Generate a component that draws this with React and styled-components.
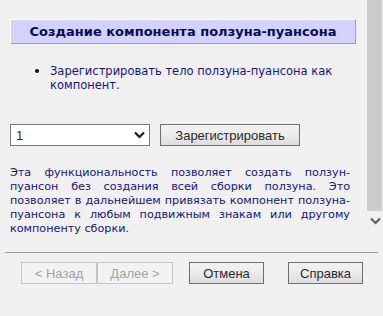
import React from "react";
import styled, { createGlobalStyle } from "styled-components";

const GlobalStyle = createGlobalStyle`
  html, body {
    margin: 0;
    padding: 0;
    background: #f0f0f0;
  }
`;

const Dialog = styled.div`
  width: 383px;
  height: 316px;
  background: #f0f0f0;
  display: flex;
  flex-direction: column;
  font-family: "DejaVu Sans", Verdana, sans-serif;
  overflow: hidden;
`;

const Pane = styled.div`
  display: flex;
  height: 240px;
`;

const Content = styled.div`
  flex: 1;
  padding: 19px 11px 0 10px;
`;

const TitleBox = styled.div`
  height: 25px;
  box-sizing: border-box;
  background: #d2d2fa;
  border-top: 1px solid #ffffff;
  border-left: 1px solid #ffffff;
  border-right: 1px solid #a0a0a0;
  border-bottom: 1px solid #a0a0a0;
  display: flex;
  align-items: center;
  justify-content: center;
  font-weight: bold;
  font-size: 13px;
  color: #0a0a5a;
`;

const Steps = styled.ul`
  margin: 19px 0 0 0;
  padding: 0 0 0 40px;
  font-size: 11.5px;
  line-height: 14px;
  color: #16167a;
  list-style: disc;

  li::marker {
    color: #0a0a40;
    font-size: 14px;
  }
`;

const Controls = styled.div`
  display: flex;
  align-items: center;
  gap: 10px;
  margin-top: 32px;
`;

const Select = styled.div`
  width: 140px;
  height: 22px;
  box-sizing: border-box;
  background: #ffffff;
  border: 1px solid #7a7a7a;
  display: flex;
  align-items: center;
  justify-content: space-between;
  padding: 0 4px 0 5px;
  font-family: "Liberation Sans", Arial, sans-serif;
  font-size: 13px;
  color: #3a2a10;
`;

const Button = styled.button`
  height: 22px;
  width: ${(p) => p.$w || 75}px;
  box-sizing: border-box;
  padding: 0;
  font-family: "Liberation Sans", Arial, sans-serif;
  font-size: 13px;
  font-weight: normal;
  color: ${(p) => (p.disabled ? "#a3a3a3" : "#2a2a2a")};
  border: 1px solid ${(p) => (p.disabled ? "#c4c4c4" : "#707070")};
  background: ${(p) =>
    p.disabled ? "#f2f2f2" : "linear-gradient(#f2f2f2, #ebebeb 50%, #dddddd)"};
  border-radius: 0;
`;

const Description = styled.div`
  margin: 20px 6px 0 0;
  font-size: 11.2px;
  line-height: 14px;
  color: #16167a;
`;

const Line = styled.span`
  display: block;
  white-space: nowrap;
  text-align: ${(p) => (p.$last ? "left" : "justify")};
  text-align-last: ${(p) => (p.$last ? "left" : "justify")};
`;

const ScrollBar = styled.div`
  width: 16px;
  display: flex;
  flex-direction: column;
  align-items: flex-start;
`;

const Thumb = styled.div`
  width: 15px;
  height: 211px;
  background: #cdcdcd;
`;

const Arrow = styled.div`
  width: 16px;
  height: 20px;
  display: flex;
  align-items: center;
  justify-content: center;
`;

const Footer = styled.div`
  flex: 1;
  padding: 0 5px;
`;

const Separator = styled.div`
  height: 1px;
  background: #a0a0a0;
  margin-top: 12px;
`;

const ButtonRow = styled.div`
  display: flex;
  margin: 9px 0 0 16px;
`;

const Spacer = styled.div`
  width: ${(p) => p.$w}px;
`;

function Chevron({ color = "#222" }) {
  return (
    <svg width="11" height="8" viewBox="0 0 11 8">
      <path d="M1 1.5 L5.5 6 L10 1.5" fill="none" stroke={color} strokeWidth="2.2" />
    </svg>
  );
}

const descriptionLines = [
  "Эта функциональность позволяет создать ползун-",
  "пуансон без создания всей сборки ползуна. Это",
  "позволяет в дальнейшем привязать компонент ползуна-",
  "пуансона к любым подвижным знакам или другому",
  "компоненту сборки.",
];

export default function App() {
  return (
    <>
      <GlobalStyle />
      <Dialog>
        <Pane>
          <Content>
            <TitleBox>Создание компонента ползуна-пуансона</TitleBox>
            <Steps>
              <li>Зарегистрировать тело ползуна-пуансона как компонент.</li>
            </Steps>
            <Controls>
              <Select>
                <span>1</span>
                <Chevron color="#1a1a1a" />
              </Select>
              <Button $w={140}>Зарегистрировать</Button>
            </Controls>
            <Description>
              {descriptionLines.map((text, i) => (
                <Line key={i} $last={i === descriptionLines.length - 1}>
                  {text}
                </Line>
              ))}
            </Description>
          </Content>
          <ScrollBar>
            <Thumb />
            <Arrow>
              <Chevron color="#606060" />
            </Arrow>
          </ScrollBar>
        </Pane>
        <Footer>
          <Separator />
          <ButtonRow>
            <Button disabled $w={76}>&lt; Назад</Button>
            <Button disabled $w={76}>Далее &gt;</Button>
            <Spacer $w={16} />
            <Button>Отмена</Button>
            <Spacer $w={24} />
            <Button>Справка</Button>
          </ButtonRow>
        </Footer>
      </Dialog>
    </>
  );
}
